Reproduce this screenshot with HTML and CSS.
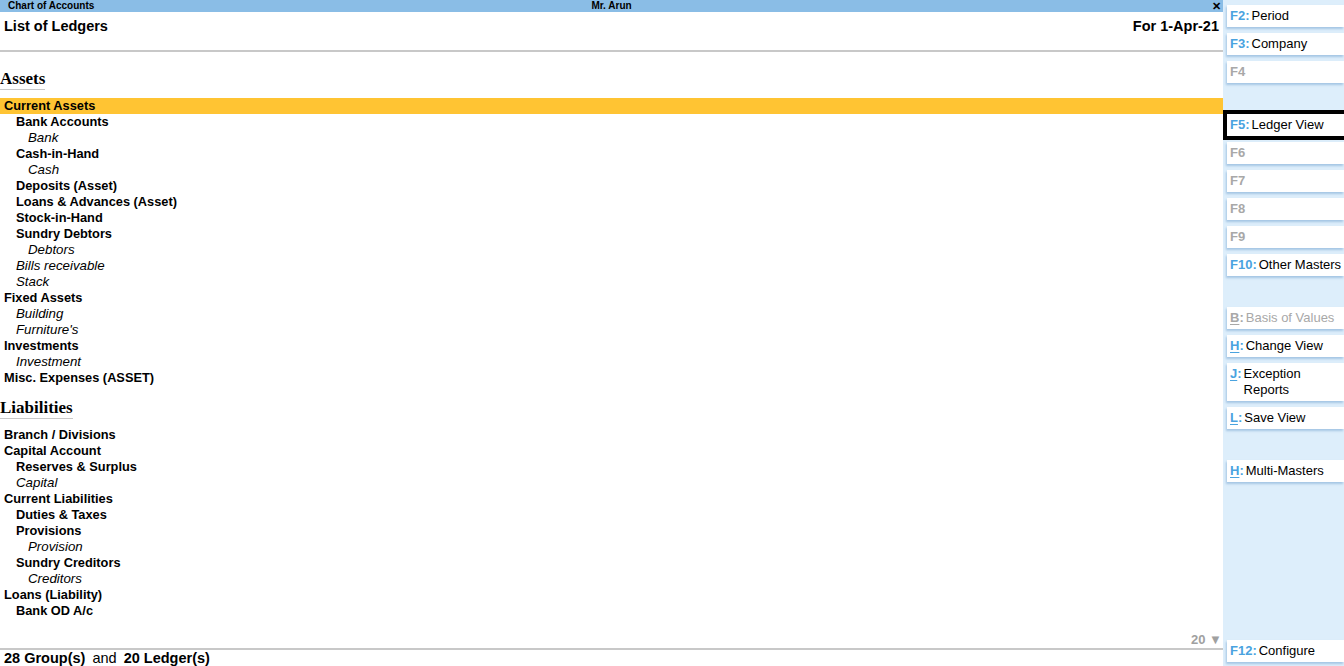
FILE: index.html
```html
<!DOCTYPE html>
<html>
<head>
<meta charset="utf-8">
<title>Chart of Accounts</title>
<link rel="stylesheet" href="styles.css">
</head>
<body>
<div class="app">
  <div class="main">
    <div class="titlebar">
      <span class="tb-left">Chart of Accounts</span>
      <span class="tb-center">Mr. Arun</span>
      <span class="tb-right">✕</span>
    </div>
    <div class="header">
      <span class="h-title">List of Ledgers</span>
      <span class="h-title">For 1-Apr-21</span>
    </div>
    <div class="rule"></div>
    <div class="content">
      <div class="heading"><span>Assets</span></div>
      <div class="row l0 grp sel">Current Assets</div>
      <div class="row l1 grp">Bank Accounts</div>
      <div class="row l2 led">Bank</div>
      <div class="row l1 grp">Cash-in-Hand</div>
      <div class="row l2 led">Cash</div>
      <div class="row l1 grp">Deposits (Asset)</div>
      <div class="row l1 grp">Loans &amp; Advances (Asset)</div>
      <div class="row l1 grp">Stock-in-Hand</div>
      <div class="row l1 grp">Sundry Debtors</div>
      <div class="row l2 led">Debtors</div>
      <div class="row l1 led">Bills receivable</div>
      <div class="row l1 led">Stack</div>
      <div class="row l0 grp">Fixed Assets</div>
      <div class="row l1 led">Building</div>
      <div class="row l1 led">Furniture's</div>
      <div class="row l0 grp">Investments</div>
      <div class="row l1 led">Investment</div>
      <div class="row l0 grp">Misc. Expenses (ASSET)</div>
      <div class="heading"><span>Liabilities</span></div>
      <div class="row l0 grp">Branch / Divisions</div>
      <div class="row l0 grp">Capital Account</div>
      <div class="row l1 grp">Reserves &amp; Surplus</div>
      <div class="row l1 led">Capital</div>
      <div class="row l0 grp">Current Liabilities</div>
      <div class="row l1 grp">Duties &amp; Taxes</div>
      <div class="row l1 grp">Provisions</div>
      <div class="row l2 led">Provision</div>
      <div class="row l1 grp">Sundry Creditors</div>
      <div class="row l2 led">Creditors</div>
      <div class="row l0 grp">Loans (Liability)</div>
      <div class="row l1 grp">Bank OD A/c</div>
    </div>
    <div class="more">20 ▼</div>
    <div class="rule"></div>
    <div class="footer"><b>28 Group(s)</b> <span class="and">and</span> <b>20 Ledger(s)</b></div>
  </div>
  <div class="panel">
    <div class="btn"><span class="key">F2:</span><span class="lbl">Period</span></div>
    <div class="btn"><span class="key">F3:</span><span class="lbl">Company</span></div>
    <div class="btn off"><span class="key">F4</span></div>
    <div class="btn gap active"><span class="key">F5:</span><span class="lbl">Ledger View</span></div>
    <div class="btn off"><span class="key">F6</span></div>
    <div class="btn off"><span class="key">F7</span></div>
    <div class="btn off"><span class="key">F8</span></div>
    <div class="btn off"><span class="key">F9</span></div>
    <div class="btn"><span class="key">F10:</span><span class="lbl">Other Masters</span></div>
    <div class="btn gap off"><span class="key"><u>B</u>:</span><span class="lbl">Basis of Values</span></div>
    <div class="btn"><span class="key"><u>H</u>:</span><span class="lbl">Change View</span></div>
    <div class="btn tall"><span class="key"><u>J</u>:</span><span class="lbl">Exception<br>Reports</span></div>
    <div class="btn"><span class="key"><u>L</u>:</span><span class="lbl">Save View</span></div>
    <div class="btn gap"><span class="key"><u>H</u>:</span><span class="lbl">Multi-Masters</span></div>
    <div class="btn bottom"><span class="key">F12:</span><span class="lbl">Configure</span></div>
  </div>
</div>
</body>
</html>
```

FILE: styles.css
```css
html, body {
  margin: 0;
  padding: 0;
  background: #ffffff;
  font-family: "Liberation Sans", Arial, sans-serif;
  color: #000;
}

.app {
  display: flex;
  width: 1344px;
  height: 666px;
  overflow: hidden;
}

.main {
  width: 1223px;
  display: flex;
  flex-direction: column;
  height: 666px;
}

.titlebar {
  height: 12px;
  background: #8abde6;
  display: grid;
  grid-template-columns: 1fr auto 1fr;
  align-items: center;
  font-size: 10px;
  font-weight: bold;
  line-height: 12px;
}

.tb-left {
  padding-left: 8px;
}

.tb-center {
  text-align: center;
}

.tb-right {
  text-align: right;
  padding-right: 2px;
  font-size: 11px;
}

.header {
  height: 38px;
  display: flex;
  justify-content: space-between;
  padding: 6px 4px 0 4px;
  box-sizing: border-box;
}

.h-title {
  font-size: 14.5px;
  font-weight: bold;
  line-height: 16px;
}

.rule {
  height: 2px;
  background: #c8c8c8;
}

.content {
  flex: 1;
  overflow: hidden;
  padding-top: 5px;
}

.heading {
  margin-top: 12px;
  margin-bottom: 8px;
  height: 21px;
}

.heading span {
  display: inline-block;
  font-family: "Liberation Serif", "Times New Roman", serif;
  font-weight: bold;
  font-size: 17px;
  line-height: 20px;
  border-bottom: 1px solid #c8c8c8;
}

.row {
  height: 16px;
  line-height: 16px;
  white-space: nowrap;
}

.grp {
  font-weight: bold;
  font-size: 12.8px;
}

.led {
  font-style: italic;
  font-size: 13.3px;
}

.l0 { padding-left: 4px; }
.l1 { padding-left: 16px; }
.l2 { padding-left: 28px; }

.sel {
  background: #ffc433;
}

.more {
  height: 16px;
  line-height: 16px;
  text-align: right;
  padding-right: 1px;
  color: #a0a0a0;
  font-weight: bold;
  font-size: 13px;
}

.footer {
  height: 16px;
  line-height: 16px;
  padding-left: 4px;
  font-size: 14.5px;
}

.footer .and {
  padding: 0 3px;
}

.panel {
  flex: 1;
  background: #ddeefb;
  display: flex;
  flex-direction: column;
  padding: 5px 0 4px 4px;
  box-sizing: border-box;
}

.btn {
  background: #ffffff;
  height: 22px;
  line-height: 22px;
  margin-bottom: 6px;
  padding-left: 3px;
  font-size: 13px;
  display: flex;
  box-shadow: -1px 2px 2px rgba(120, 165, 210, 0.55);
  white-space: nowrap;
}

.btn.gap {
  margin-top: 25px;
}

.btn.tall {
  height: 38px;
  line-height: 16px;
  padding-top: 3px;
  box-sizing: border-box;
}

.btn.bottom {
  margin-top: auto;
  margin-bottom: 0;
}

.btn.active {
  outline: 4px solid #000;
  outline-offset: 0px;
  position: relative;
  z-index: 1;
}

.key {
  color: #4aa3df;
  font-weight: bold;
  margin-right: 2px;
}

.key u {
  text-decoration-thickness: 1px;
  text-underline-offset: 2px;
}

.btn.off .key,
.btn.off .lbl {
  color: #a8a8a8;
}
```
